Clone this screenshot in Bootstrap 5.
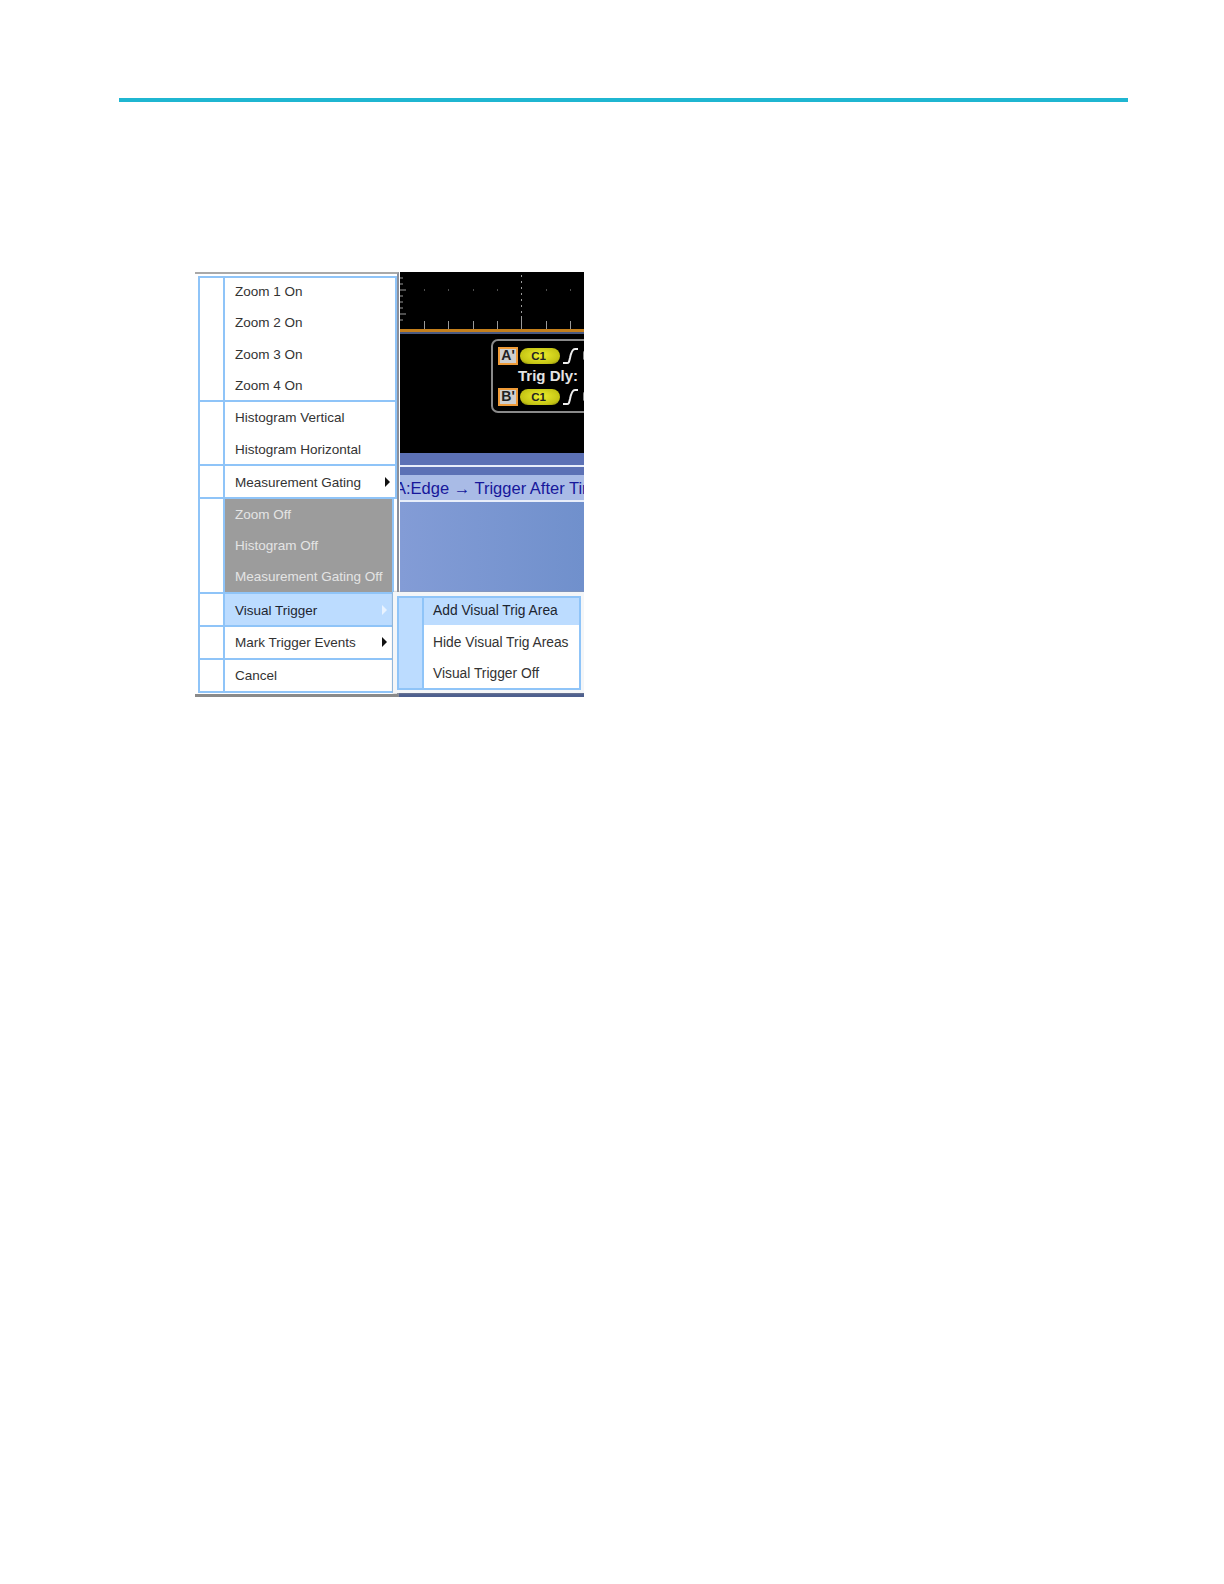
<!DOCTYPE html>
<html lang="en">
<head>
<meta charset="utf-8">
<title>Visual Trigger menu</title>
<link rel="stylesheet" href="https://cdn.jsdelivr.net/npm/bootstrap@5.3.0/dist/css/bootstrap.min.css">
<style>
body{background:#fff;font-family:"Liberation Sans",Arial,sans-serif;margin:0}
.pagewrap{padding:98px 96px 0 119px}
.toprule{height:4px;background:#1fb6d1}
.shot{width:389px;height:425px;margin:170px 0 0 76px;overflow:hidden;background:#fff}
.scope{padding-left:205px;height:421px}
.blackarea{height:181px;background:#000}
.blackarea svg{display:block}
.band1{height:12px;background:#5c71b5}
.wline{height:2px;background:#e8eefa}
.band2{height:8px;background:#5c71b5}
.textband{height:25px;line-height:27px;background:#a9bbe6;color:#17179b;font-size:16.5px;white-space:nowrap;text-indent:-5px}
.gradarea{height:91px;background:linear-gradient(90deg,#839cd6,#7090cc)}
.scopefoot{height:4px;background:#4d5f8e}

.trigbox{left:91px;top:67px;width:140px;height:74px;border:2px solid #8a8a8a;border-radius:7px;background:#000;color:#e4e4e4;font-weight:700;font-size:15px;padding:5px 0 0 5px}
.trigrow{height:19px;gap:2px}
.trigmid{height:22px;line-height:22px;padding-left:20px;white-space:nowrap}
.letterbox{width:20px;height:18px;background:#cfcfcf;border:2px solid #ef9b38;color:#222;font-size:14px;line-height:13px;text-align:center;flex:none}
.pillc{width:40px;height:16px;border-radius:8px;background:radial-gradient(ellipse at 50% 45%,#efef2e,#c4c414 70%,#6f6f08);color:#222;font-size:11.5px;line-height:16px;text-align:center;padding-right:3px}
.trail{width:3px;height:9px;margin-left:1px;border-radius:2px;background:#8f8f8f;flex:none}

.mainmenu{left:0;top:0;width:204px;height:425px;background:#fff;border-top:2px solid #a9a9a9;border-right:2px solid #8a8f9b;border-bottom:3px solid #8a8a8a;padding:2px 0 0 3px;color:#333;font-size:13.5px}
.mainframe{width:199px;border-top:2px solid #8fc4f8;border-left:2px solid #8fc4f8}
.mgroup{border-bottom:2px solid #8fc4f8;border-right:2px solid #8fc4f8}
.mgroup.slim{margin-right:3px}
.h1g{height:124px}.h2g{height:64px}.h3g{height:33px}.h4g{height:95px}.h7g{height:33px}
.mgutter{width:25px;flex:none;border-right:2px solid #8fc4f8}
.mbody{flex:1 1 auto;min-width:0}
.mrow{flex:1 1 0;padding-left:10px;white-space:nowrap;position:relative}
.fixedrows .mrow{flex:0 0 31.3px}
.h1g .fixedrows{margin-top:-1.500px}
.h2g .fixedrows{margin-top:.5px}
.h2g .fixedrows .mrow{flex-basis:32px}
.pt4{padding-top:4px}.pt2{padding-top:2px}
.offgroup{background:#9c9c9c;color:#e4e4e4}
.hot{background:#bcdcff;color:#1c2530}
.caret{position:absolute;right:5px;top:50%;margin-top:-7px;width:0;height:0;border-left:5px solid #111;border-top:5px solid transparent;border-bottom:5px solid transparent}
.caret.pale{border-left-color:#e9f3ff}

.submenu{left:198px;top:320px;width:191px;height:101px;background:#f4f6f8;padding:4px 0 0 4px;color:#333;font-size:13.8px;box-shadow:0 0 2px #999}
.subframe{width:184px;height:94px;border:2px solid #8fc4f8;background:#fff}
.subgutter{width:25px;flex:none;background:#bcdcff;border-right:2px solid #8fc4f8}
.subrow{height:32px;line-height:36px;padding-left:9px;white-space:nowrap}
.subrow.hot{height:27px;line-height:25px}
.subrow.lastrow{height:31px;line-height:33px}
</style>
</head>
<body>
<div class="pagewrap">
  <div class="toprule"></div>
  <div class="shot position-relative">
    <div class="scope d-flex flex-column">
      <div class="blackarea position-relative">
        <svg width="184" height="181" viewBox="0 0 184 181" xmlns="http://www.w3.org/2000/svg">
          <g stroke="#9a9a9a" stroke-width="1">
            <path d="M0 6h3M0 12h3M0 18h6M0 24h3M0 30h3M0 36h3M0 42h6M0 48h3"/>
            <path d="M24.500 49v8M48.500 49v8M73.500 49v8M97.500 49v8M121.500 44v13M146.500 49v8M170.500 49v8"/>
            <path d="M121.500 3v2M121.500 9v2M121.500 15v2M121.500 21v2M121.500 27v2M121.500 33v2M121.500 39v2"/>
            <path d="M24 18h1M48 18h1M73 18h1M97 18h1M146 18h1M170 18h1"/>
          </g>
          <rect x="0" y="57" width="184" height="3" fill="#c47f1c"/>
          <rect x="0" y="60" width="184" height="2" fill="#4b5a80"/>
        </svg>
        <div class="trigbox position-absolute d-flex flex-column">
          <div class="trigrow d-flex align-items-center">
            <div class="letterbox">A'</div>
            <div class="pillc">C1</div>
            <svg width="18" height="18" viewBox="0 0 18 18" xmlns="http://www.w3.org/2000/svg"><path d="M1 16h4c2 0 2-1 3-5 1-5 2-9 5-9h3" fill="none" stroke="#eee" stroke-width="2"/></svg>
            <span class="trail"></span>
          </div>
          <div class="trigmid">Trig Dly:</div>
          <div class="trigrow d-flex align-items-center">
            <div class="letterbox">B'</div>
            <div class="pillc">C1</div>
            <svg width="18" height="18" viewBox="0 0 18 18" xmlns="http://www.w3.org/2000/svg"><path d="M1 16h4c2 0 2-1 3-5 1-5 2-9 5-9h3" fill="none" stroke="#eee" stroke-width="2"/></svg>
            <span class="trail"></span>
          </div>
        </div>
      </div>
      <div class="band1"></div>
      <div class="wline"></div>
      <div class="band2"></div>
      <div class="textband overflow-hidden">A:Edge → Trigger After Time</div>
      <div class="wline"></div>
      <div class="gradarea flex-grow-1"></div>
    </div>
    <div class="scopefoot"></div>

    <div class="mainmenu position-absolute">
      <div class="mainframe d-flex flex-column">
        <div class="mgroup h1g d-flex">
          <div class="mgutter"></div>
          <div class="mbody fixedrows d-flex flex-column">
            <div class="mrow d-flex align-items-center">Zoom 1 On</div>
            <div class="mrow d-flex align-items-center">Zoom 2 On</div>
            <div class="mrow d-flex align-items-center">Zoom 3 On</div>
            <div class="mrow d-flex align-items-center">Zoom 4 On</div>
          </div>
        </div>
        <div class="mgroup h2g d-flex">
          <div class="mgutter"></div>
          <div class="mbody fixedrows d-flex flex-column">
            <div class="mrow d-flex align-items-center">Histogram Vertical</div>
            <div class="mrow d-flex align-items-center">Histogram Horizontal</div>
          </div>
        </div>
        <div class="mgroup h3g d-flex">
          <div class="mgutter"></div>
          <div class="mbody pt4 d-flex flex-column">
            <div class="mrow d-flex align-items-center">Measurement Gating<span class="caret"></span></div>
          </div>
        </div>
        <div class="mgroup slim h4g d-flex">
          <div class="mgutter"></div>
          <div class="mbody offgroup fixedrows d-flex flex-column">
            <div class="mrow d-flex align-items-center">Zoom Off</div>
            <div class="mrow d-flex align-items-center">Histogram Off</div>
            <div class="mrow d-flex align-items-center">Measurement Gating Off</div>
          </div>
        </div>
        <div class="mgroup slim h3g d-flex">
          <div class="mgutter"></div>
          <div class="mbody hot pt4 d-flex flex-column">
            <div class="mrow d-flex align-items-center">Visual Trigger<span class="caret pale"></span></div>
          </div>
        </div>
        <div class="mgroup slim h3g d-flex">
          <div class="mgutter"></div>
          <div class="mbody pt2 d-flex flex-column">
            <div class="mrow d-flex align-items-center">Mark Trigger Events<span class="caret"></span></div>
          </div>
        </div>
        <div class="mgroup slim h7g d-flex">
          <div class="mgutter"></div>
          <div class="mbody pt2 d-flex flex-column">
            <div class="mrow d-flex align-items-center">Cancel</div>
          </div>
        </div>
      </div>
    </div>

    <div class="submenu position-absolute">
      <div class="subframe d-flex">
        <div class="subgutter"></div>
        <div class="mbody">
          <div class="subrow hot">Add Visual Trig Area</div>
          <div class="subrow">Hide Visual Trig Areas</div>
          <div class="subrow lastrow">Visual Trigger Off</div>
        </div>
      </div>
    </div>
  </div>
</div>
<script src="https://cdn.jsdelivr.net/npm/bootstrap@5.3.0/dist/js/bootstrap.bundle.min.js"></script>
</body>
</html>
